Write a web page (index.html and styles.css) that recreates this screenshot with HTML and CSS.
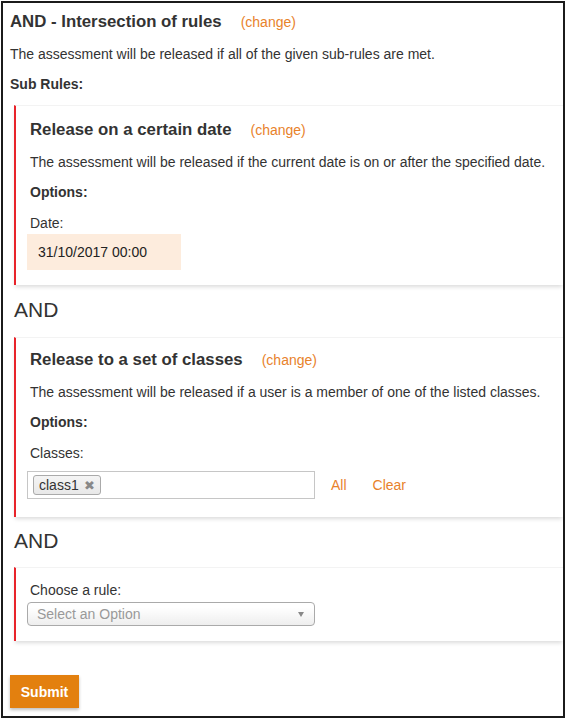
FILE: index.html
```html
<!DOCTYPE html>
<html>
<head>
<meta charset="utf-8">
<link rel="stylesheet" href="styles.css">
</head>
<body>
<div class="frame">
  <div class="rule-head"><span class="rule-title">AND - Intersection of rules</span><a class="change">(change)</a></div>
  <p class="desc">The assessment will be released if all of the given sub-rules are met.</p>
  <p class="label-bold sub">Sub Rules:</p>

  <div class="card card-date">
    <div class="rule-head"><span class="rule-title">Release on a certain date</span><a class="change">(change)</a></div>
    <p class="desc">The assessment will be released if the current date is on or after the specified date.</p>
    <p class="label-bold">Options:</p>
    <p class="label">Date:</p>
    <div class="date-box">31/10/2017 00:00</div>
  </div>

  <div class="and">AND</div>

  <div class="card card-classes">
    <div class="rule-head"><span class="rule-title">Release to a set of classes</span><a class="change">(change)</a></div>
    <p class="desc">The assessment will be released if a user is a member of one of the listed classes.</p>
    <p class="label-bold">Options:</p>
    <p class="label">Classes:</p>
    <div class="class-row">
      <div class="tag-input"><span class="chip">class1 <span class="chip-x">✖</span></span></div>
      <a class="action">All</a>
      <a class="action">Clear</a>
    </div>
  </div>

  <div class="and and-last">AND</div>

  <div class="card card-choose">
    <p class="label">Choose a rule:</p>
    <div class="select"><span class="placeholder">Select an Option</span><span class="arrow"></span></div>
  </div>

  <button class="submit">Submit</button>
</div>
</body>
</html>
```
FILE: styles.css
```css
html, body {
  margin: 0;
  padding: 0;
  background: #fff;
}
body {
  padding: 1px;
  font-family: "Liberation Sans", Arial, sans-serif;
  color: #333;
  font-size: 14px;
}
.frame {
  box-sizing: border-box;
  width: 564px;
  height: 717px;
  border: 2px solid #1b1b1b;
  padding: 9px 0 0 7px;
  overflow: hidden;
}
p { margin: 0; }
.rule-head {
  display: flex;
  align-items: baseline;
  line-height: 20px;
}
.rule-title {
  font-size: 16.8px;
  font-weight: bold;
  color: #333;
}
.change {
  color: #e8822b;
  font-size: 14px;
  margin-left: 19px;
}
.desc {
  line-height: 20px;
  margin-top: 12px;
}
.label-bold {
  font-weight: bold;
  line-height: 20px;
  margin-top: 10px;
}
.label {
  line-height: 20px;
  margin-top: 11px;
}
.sub { margin-bottom: 11px; }
.card {
  margin-left: 4px;
  border-left: 2px solid #e8232a;
  border-top: 1px solid #f3f3f3;
  box-shadow: 0 3px 4px -1px rgba(0, 0, 0, 0.14);
  padding: 14px 0 15px 14px;
  background: #fff;
}
.date-box {
  margin-top: 1px;
  margin-left: -3px;
  width: 154px;
  height: 36px;
  box-sizing: border-box;
  background: #fdecdd;
  color: #222;
  padding-left: 11px;
  line-height: 36px;
}
.and {
  font-size: 21px;
  line-height: 24px;
  margin: 13px 0 15px 4px;
  color: #333;
}
.and-last { margin-top: 12px; margin-bottom: 14px; }
.card-classes { padding-top: 12px; padding-bottom: 18px; }
.class-row {
  display: flex;
  align-items: center;
  margin-top: 8px;
  margin-left: -3px;
}
.tag-input {
  box-sizing: border-box;
  width: 288px;
  height: 28px;
  border: 1px solid #c6c6c6;
  padding: 3px 5px;
  display: flex;
  align-items: center;
}
.chip {
  box-sizing: border-box;
  height: 20px;
  line-height: 18px;
  border: 1px solid #aaa;
  border-radius: 3px;
  background: linear-gradient(#f4f4f4, #e8e8e8);
  padding: 0 5px;
  color: #333;
  font-size: 14px;
}
.chip-x {
  color: #888;
  font-size: 13px;
  margin-left: 1px;
}
.action {
  color: #e8822b;
  margin-left: 16px;
  line-height: 20px;
}
.action + .action { margin-left: 26px; }
.card-choose { padding-top: 12px; padding-bottom: 15px; }
.card-choose .label { margin-top: 0; }
.select {
  margin-top: 2px;
  margin-left: -3px;
  box-sizing: border-box;
  width: 288px;
  height: 24px;
  border: 1px solid #aaa;
  border-radius: 4px;
  background: linear-gradient(#ffffff 20%, #eeeeee);
  display: flex;
  align-items: center;
  justify-content: space-between;
  padding: 0 10px 0 9px;
}
.placeholder { color: #999; font-size: 14px; }
.arrow {
  width: 0;
  height: 0;
  border-left: 3px solid transparent;
  border-right: 3px solid transparent;
  border-top: 5px solid #888;
}
.submit {
  display: block;
  margin-top: 34px;
  margin-left: 0;
  box-sizing: border-box;
  width: 69px;
  height: 33px;
  border: none;
  background: #e3800f;
  color: #fff;
  font-family: "Liberation Sans", Arial, sans-serif;
  font-size: 14px;
  font-weight: bold;
  box-shadow: 0 2px 3px rgba(0, 0, 0, 0.25);
  padding: 0;
}
```
